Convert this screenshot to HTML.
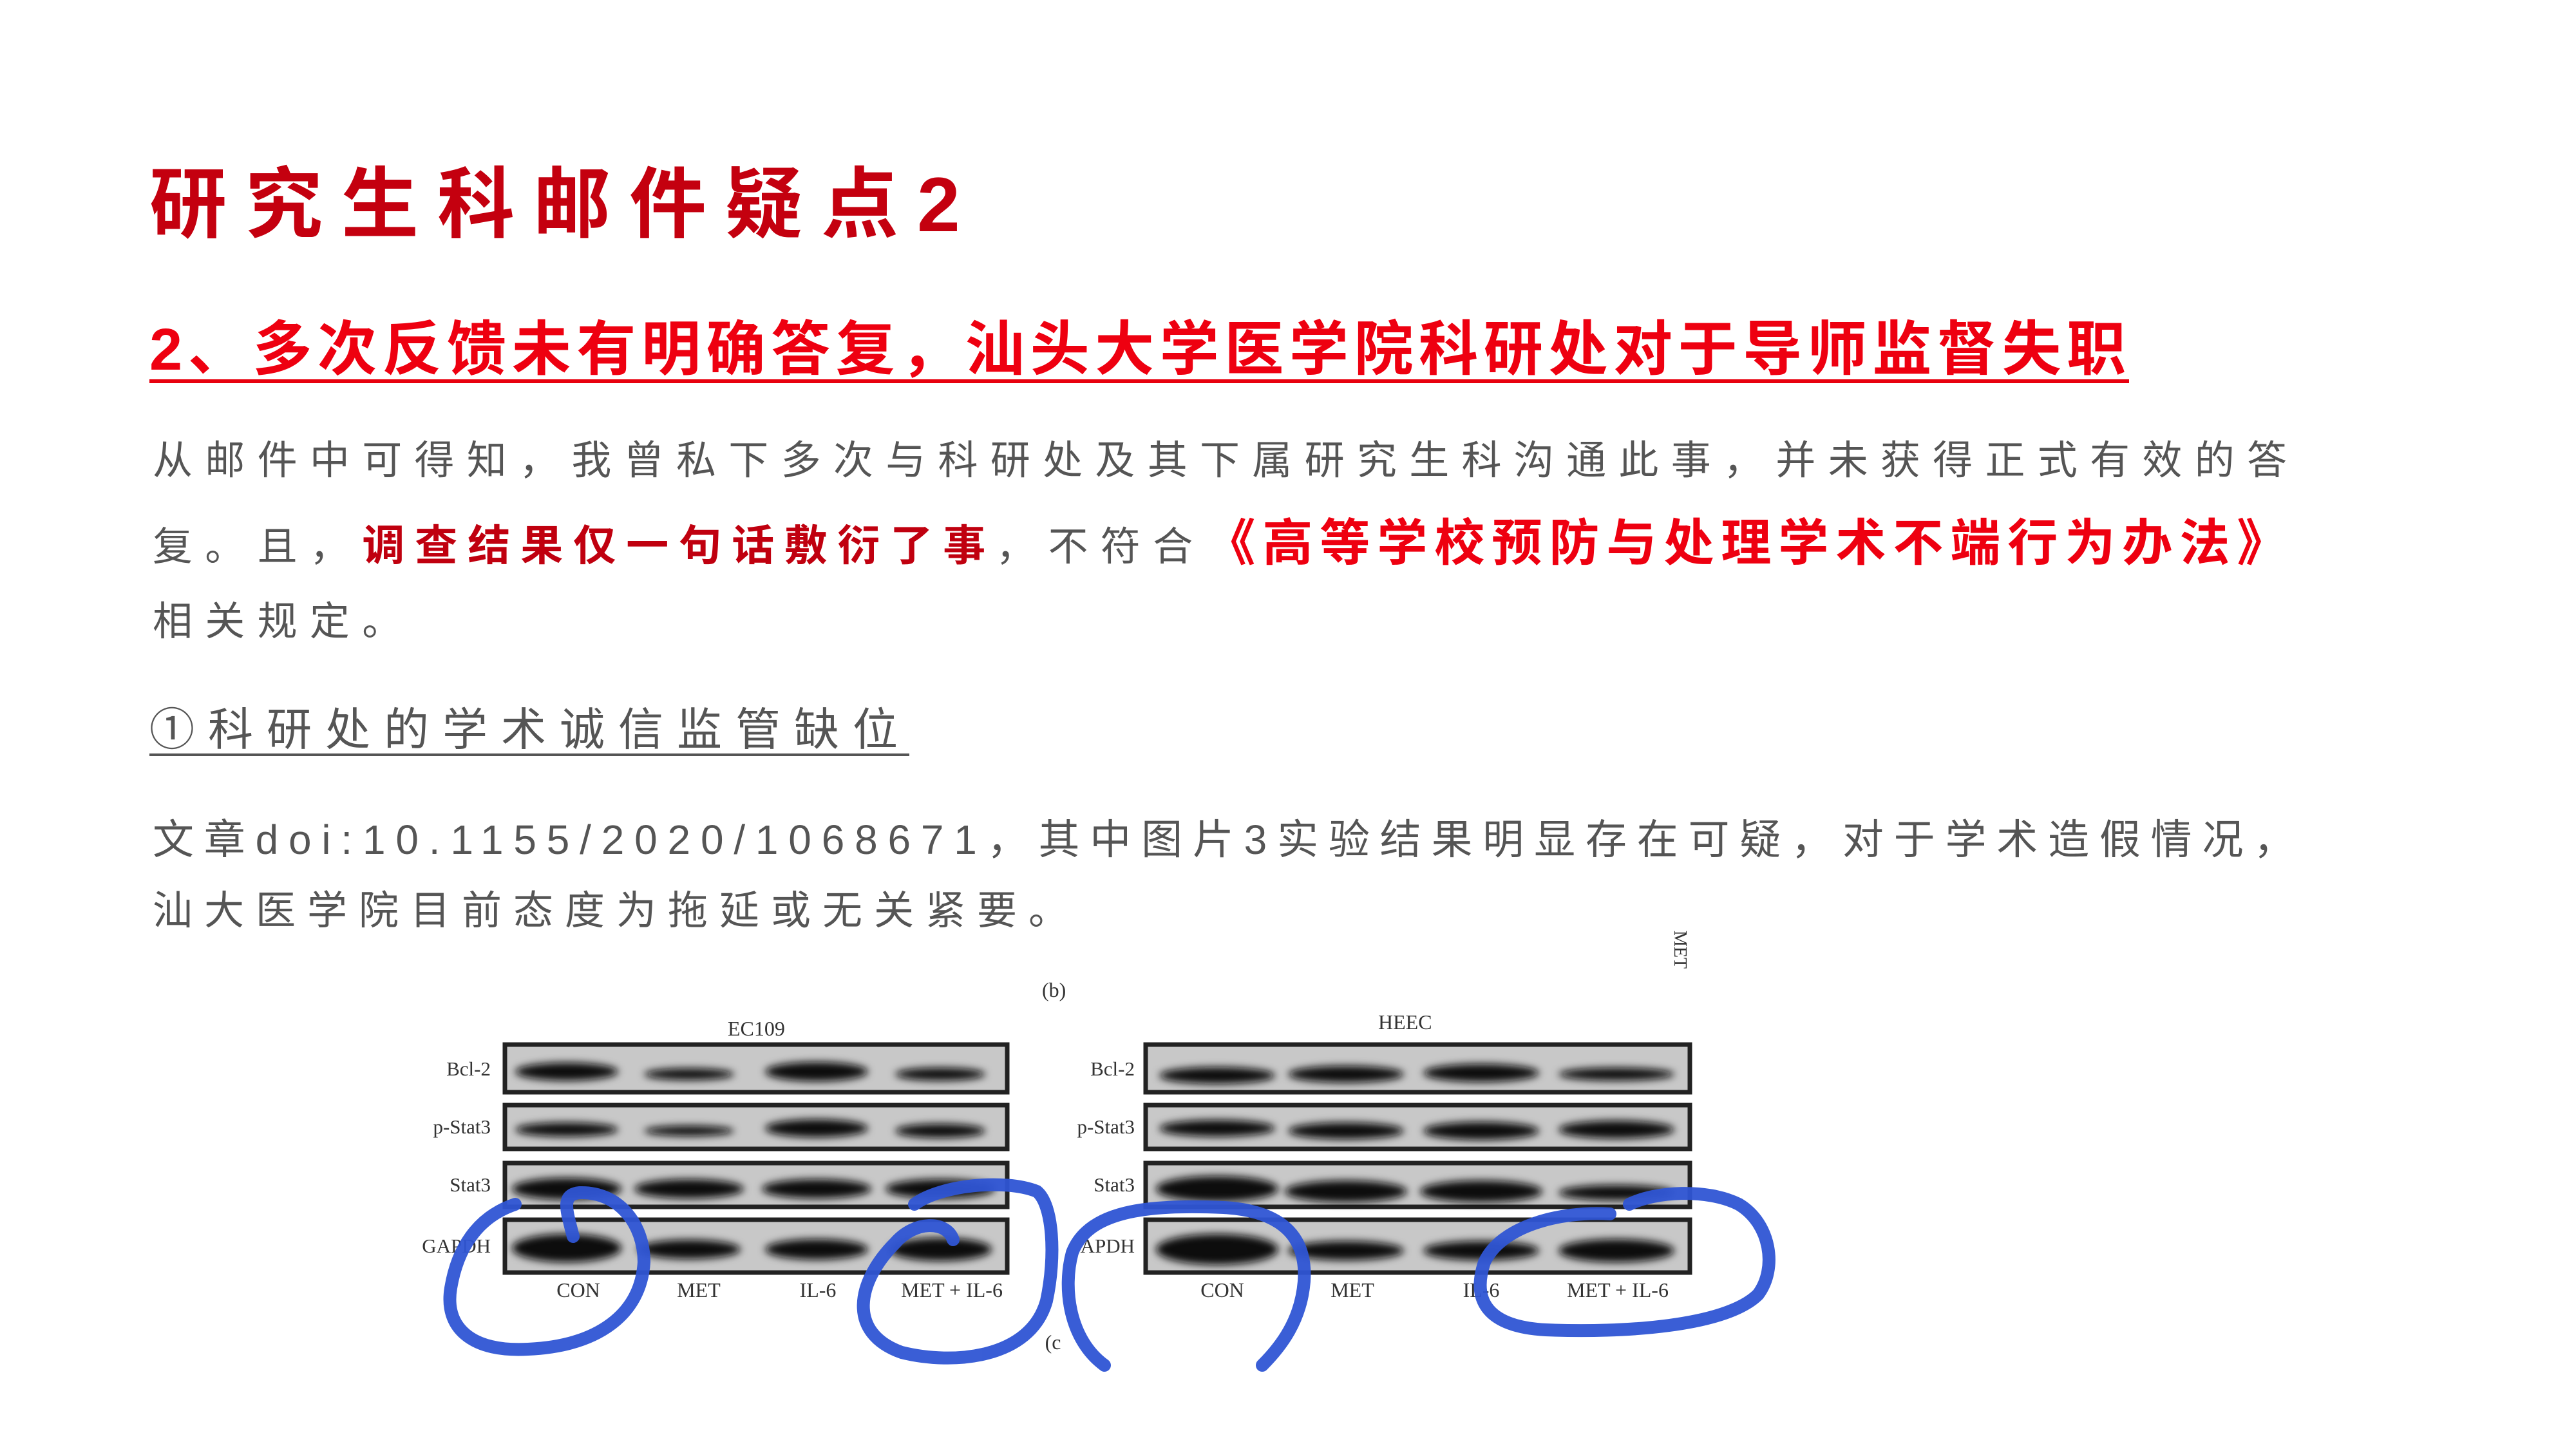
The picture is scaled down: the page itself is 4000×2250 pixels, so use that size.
<!DOCTYPE html>
<html><head><meta charset="utf-8"><style>
body{margin:0;width:4000px;height:2250px;background:#fff;position:relative;overflow:hidden;font-family:"Liberation Sans","Noto Sans CJK SC",sans-serif}
.t{position:absolute;white-space:nowrap;line-height:1}
.g{color:#555;font-size:62px;letter-spacing:19.3px}
.rb{color:#c0000f;font-weight:bold;font-size:66px;letter-spacing:16px}
.rr{color:#ee0010;font-weight:bold;font-size:78px;letter-spacing:11px}
</style></head><body>
<div class="t" style="left:232px;top:258px;font-size:120px;letter-spacing:29px;color:#c4000f;font-weight:bold">研究生科邮件疑点2</div>
<div class="t" style="left:232px;top:497px;font-size:92px;letter-spacing:8.6px;color:#ee0010;font-weight:bold">2、多次反馈未有明确答复，汕头大学医学院科研处对于导师监督失职</div>
<div style="position:absolute;left:232px;top:589px;width:3074px;height:6px;background:#e8000f"></div>
<div class="t g" style="left:237px;top:685px">从邮件中可得知，我曾私下多次与科研处及其下属研究生科沟通此事，并未获得正式有效的答</div>
<div class="t" style="left:237px;top:793px;line-height:100px"><span class="g">复。且，</span><span class="rb">调查结果仅一句话敷衍了事</span><span class="g">，不符合</span><span class="rr">《高等学校预防与处理学术不端行为办法》</span></div>
<div class="t g" style="left:237px;top:935px">相关规定。</div>
<div class="t" style="left:232px;top:1098px;font-size:70px;letter-spacing:21px;color:#555">①科研处的学术诚信监管缺位</div>
<div style="position:absolute;left:232px;top:1170px;width:1180px;height:4px;background:#555"></div>
<div class="t g" style="left:237px;top:1272px;font-size:64px;letter-spacing:15.8px">文章doi:10.1155/2020/1068671，其中图片3实验结果明显存在可疑，对于学术造假情况，</div>
<div class="t g" style="left:237px;top:1384px;letter-spacing:18px">汕大医学院目前态度为拖延或无关紧要。</div>

<svg style="position:absolute;left:0;top:0" width="4000" height="2250" font-family="Liberation Serif,serif" font-size="32" fill="#333">
<defs><filter id="b" x="-20%" y="-50%" width="140%" height="200%"><feGaussianBlur stdDeviation="6"/></filter></defs>
<text x="2600" y="1445" transform="rotate(90 2600 1445)" font-size="28">MET</text>
<text x="1618" y="1548">(b)</text>
<text x="1130" y="1608">EC109</text>
<text x="2140" y="1598">HEEC</text>
<g font-size="31" text-anchor="end">
<text x="762" y="1670">Bcl-2</text><text x="762" y="1760">p-Stat3</text><text x="762" y="1850">Stat3</text><text x="762" y="1945">GAPDH</text></g>
<g font-size="31" text-anchor="end">
<text x="1762" y="1670">Bcl-2</text><text x="1762" y="1760">p-Stat3</text><text x="1762" y="1850">Stat3</text><text x="1762" y="1945">APDH</text></g>
<g stroke="#222" stroke-width="7" fill="#c8c8c8">
<rect x="784" y="1622" width="780" height="74"/><rect x="784" y="1716" width="780" height="68"/><rect x="784" y="1806" width="780" height="68"/><rect x="784" y="1894" width="780" height="82"/>
<rect x="1779" y="1622" width="845" height="74"/><rect x="1779" y="1716" width="845" height="68"/><rect x="1779" y="1806" width="845" height="68"/><rect x="1779" y="1894" width="845" height="82"/>
</g>
<g fill="#111" filter="url(#b)">
<ellipse cx="880" cy="1664" rx="80" ry="14"/><ellipse cx="1070" cy="1668" rx="70" ry="9"/><ellipse cx="1268" cy="1664" rx="80" ry="15"/><ellipse cx="1460" cy="1668" rx="70" ry="10"/>
<ellipse cx="880" cy="1754" rx="80" ry="11"/><ellipse cx="1070" cy="1756" rx="70" ry="8"/><ellipse cx="1268" cy="1752" rx="80" ry="14"/><ellipse cx="1460" cy="1756" rx="70" ry="11"/>
<ellipse cx="880" cy="1846" rx="85" ry="17"/><ellipse cx="1070" cy="1846" rx="85" ry="15"/><ellipse cx="1268" cy="1846" rx="85" ry="15"/><ellipse cx="1460" cy="1846" rx="85" ry="15"/>
<ellipse cx="880" cy="1938" rx="85" ry="22"/><ellipse cx="1070" cy="1940" rx="80" ry="15"/><ellipse cx="1268" cy="1940" rx="80" ry="16"/><ellipse cx="1460" cy="1940" rx="80" ry="18"/>
<ellipse cx="1890" cy="1670" rx="90" ry="13"/><ellipse cx="2090" cy="1668" rx="90" ry="13"/><ellipse cx="2300" cy="1666" rx="90" ry="14"/><ellipse cx="2510" cy="1668" rx="90" ry="10"/>
<ellipse cx="1890" cy="1752" rx="90" ry="13"/><ellipse cx="2090" cy="1756" rx="90" ry="13"/><ellipse cx="2300" cy="1756" rx="90" ry="14"/><ellipse cx="2510" cy="1754" rx="90" ry="14"/>
<ellipse cx="1890" cy="1846" rx="95" ry="20"/><ellipse cx="2090" cy="1850" rx="95" ry="17"/><ellipse cx="2300" cy="1850" rx="95" ry="17"/><ellipse cx="2510" cy="1852" rx="90" ry="12"/>
<ellipse cx="1890" cy="1940" rx="95" ry="24"/><ellipse cx="2090" cy="1942" rx="90" ry="15"/><ellipse cx="2300" cy="1942" rx="90" ry="15"/><ellipse cx="2510" cy="1942" rx="90" ry="18"/>
</g>
<g font-size="32" text-anchor="middle">
<text x="898" y="2014">CON</text><text x="1085" y="2014">MET</text><text x="1270" y="2014">IL-6</text><text x="1478" y="2014">MET + IL-6</text>
<text x="1898" y="2014">CON</text><text x="2100" y="2014">MET</text><text x="2300" y="2014">IL-6</text><text x="2512" y="2014">MET + IL-6</text>
<text x="1635" y="2095">(c</text>
</g>
<g fill="none" stroke="#2f55d4" stroke-width="20" stroke-linecap="round" opacity="0.95">
<path d="M890 1920 C880 1880 870 1855 900 1852 C960 1850 1000 1900 1000 1960 C995 2040 930 2090 820 2095 C730 2100 690 2060 700 2000 C710 1940 740 1890 800 1870"/>
<path d="M1480 1925 C1470 1895 1420 1895 1390 1930 C1330 1990 1315 2070 1400 2100 C1480 2120 1600 2110 1625 2020 C1640 1950 1635 1870 1610 1850 C1560 1830 1460 1840 1420 1870"/>
<path d="M1715 2120 C1660 2080 1650 2000 1665 1945 C1690 1880 1780 1870 1900 1875 C1990 1880 2030 1920 2025 1990 C2020 2050 1990 2090 1960 2120"/>
<path d="M2500 1885 C2420 1880 2330 1905 2305 1960 C2285 2020 2310 2060 2400 2065 C2520 2070 2680 2060 2730 2010 C2760 1970 2750 1900 2700 1870 C2650 1845 2570 1850 2530 1870"/>
</g>
</svg>
</body></html>
